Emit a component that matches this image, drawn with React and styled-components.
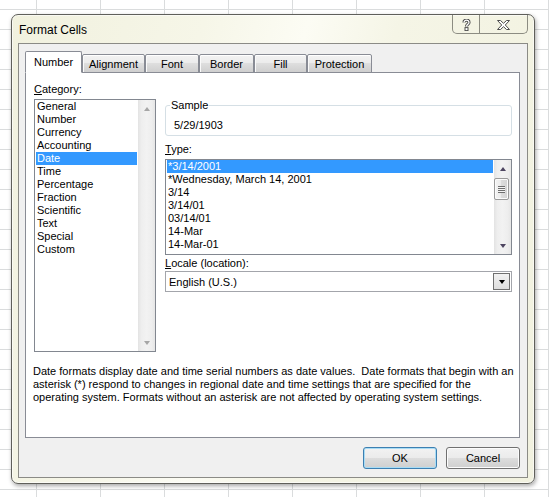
import styled, { createGlobalStyle } from "styled-components";

const GlobalStyle = createGlobalStyle`
    html, body {
        margin: 0;
        padding: 0;
    }
    body {
        font-family: "Liberation Sans", Arial, sans-serif;
        font-size: 11px;
        color: #000;
    }
    * {
        box-sizing: border-box;
    }
`;

const categories = ["General", "Number", "Currency", "Accounting", "Date", "Time",
    "Percentage", "Fraction", "Scientific", "Text", "Special", "Custom"];

const types = ["*3/14/2001", "*Wednesday, March 14, 2001", "3/14", "3/14/01",
    "03/14/01", "14-Mar", "14-Mar-01"];

const tabs = [
    { label: "Number", width: 57 },
    { label: "Alignment", width: 63 },
    { label: "Font", width: 54 },
    { label: "Border", width: 55 },
    { label: "Fill", width: 53 },
    { label: "Protection", width: 65 },
];

const description = `Date formats display date and time serial numbers as date values.  Date formats that begin with an
asterisk (*) respond to changes in regional date and time settings that are specified for the
operating system. Formats without an asterisk are not affected by operating system settings.`;

export default function App() {
    return (
        <>
            <GlobalStyle />
            <Sheet>
                <Window>
                    <TitleBar>
                        <Title>Format Cells</Title>
                        <CaptionButtons>
                            <CaptionButton $width={28}>
                                <svg width="9" height="12" viewBox="0 0 9 12">
                                    <path d="M2 3.6 C2 1.8 3.3 1.2 4.5 1.2 C6 1.2 7 2.1 7 3.4 C7 5.2 4.5 5.3 4.5 7.4"
                                        fill="none" stroke="#505050" strokeWidth="3.2" />
                                    <path d="M2 3.6 C2 1.8 3.3 1.2 4.5 1.2 C6 1.2 7 2.1 7 3.4 C7 5.2 4.5 5.3 4.5 7.4"
                                        fill="none" stroke="#fff" strokeWidth="1.2" />
                                    <rect x="3" y="8.6" width="3" height="3" fill="#fff" stroke="#505050" strokeWidth="1" />
                                </svg>
                            </CaptionButton>
                            <CaptionButton $width={47} $last>
                                <svg width="13" height="10" viewBox="0 0 13 10">
                                    <polygon points="0.5,0.5 3.5,0.5 6.5,3.3 9.5,0.5 12.5,0.5 8.3,5 12.5,9.5 9.5,9.5 6.5,6.7 3.5,9.5 0.5,9.5 4.7,5"
                                        fill="#fff" stroke="#4e4e4e" strokeWidth="1" strokeLinejoin="round" />
                                </svg>
                            </CaptionButton>
                        </CaptionButtons>
                    </TitleBar>
                    <Client>
                        <TabStrip>
                            {tabs.map((t, i) =>
                                <Tab key={t.label} $width={t.width} $active={i === 0}>{t.label}</Tab>)}
                        </TabStrip>
                        <Panel>
                            <Columns>
                                <CategoryColumn>
                                    <FieldLabel><u>C</u>ategory:</FieldLabel>
                                    <ListBox $height={253}>
                                        <Items>
                                            {categories.map(c =>
                                                <Item key={c} $selected={c === "Date"}>{c}</Item>)}
                                        </Items>
                                        <ScrollBar>
                                            <ArrowButton><Arrow $up $disabled /></ArrowButton>
                                            <Track />
                                            <ArrowButton><Arrow $disabled /></ArrowButton>
                                        </ScrollBar>
                                    </ListBox>
                                </CategoryColumn>
                                <DetailColumn>
                                    <SampleGroup>
                                        <Legend>Sample</Legend>
                                        <SampleValue>5/29/1903</SampleValue>
                                    </SampleGroup>
                                    <FieldLabel $top={7}><u>T</u>ype:</FieldLabel>
                                    <ListBox $height={96}>
                                        <Items>
                                            {types.map((t, i) =>
                                                <Item key={t} $selected={i === 0}>{t}</Item>)}
                                        </Items>
                                        <ScrollBar>
                                            <ArrowButton><Arrow $up /></ArrowButton>
                                            <Track>
                                                <Thumb><Grip /></Thumb>
                                            </Track>
                                            <ArrowButton><Arrow /></ArrowButton>
                                        </ScrollBar>
                                    </ListBox>
                                    <FieldLabel $top={2} $bottom={1}><u>L</u>ocale (location):</FieldLabel>
                                    <ComboBox>
                                        <ComboText>English (U.S.)</ComboText>
                                        <DropButton><Arrow $dark /></DropButton>
                                    </ComboBox>
                                </DetailColumn>
                            </Columns>
                            <Description>{description}</Description>
                        </Panel>
                        <ButtonRow>
                            <DialogButton $default>OK</DialogButton>
                            <DialogButton>Cancel</DialogButton>
                        </ButtonRow>
                    </Client>
                </Window>
            </Sheet>
        </>
    );
}

const Sheet = styled.div`
    width: 549px;
    height: 497px;
    padding: 14px 0 0 11px;
    background-color: #fff;
    background-image:
        linear-gradient(to right, #dadcdd 1px, transparent 1px),
        linear-gradient(to bottom, #dadcdd 1px, transparent 1px);
    background-size: 64px 20px;
    background-position: 36px 9px;
    overflow: hidden;
`;

const Window = styled.div`
    width: 524px;
    height: 470px;
    display: flex;
    flex-direction: column;
    padding: 0 6px 5px 6px;
    border: 1px solid #5f5f5a;
    border-radius: 7px;
    background: linear-gradient(105deg, #f1f1de 0%, #f6f6e8 30%, #fcfcf4 46%, #f5f5e6 60%, #f1f1df 100%);
    box-shadow: 1px 2px 4px rgba(0, 0, 0, 0.35), inset 0 0 0 1px rgba(255, 255, 255, 0.6);
`;

const TitleBar = styled.div`
    height: 28px;
    display: flex;
    align-items: flex-start;
`;

const Title = styled.div`
    font-size: 12px;
    line-height: 15px;
    padding: 8px 0 0 1px;
    color: #000;
`;

const CaptionButtons = styled.div`
    margin-left: auto;
    display: flex;
    height: 19px;
    border: 1px solid #8c8c82;
    border-top: none;
    border-radius: 0 0 5px 5px;
    overflow: hidden;
`;

const CaptionButton = styled.div`
    width: ${props => props.$width - (props.$last ? 0 : 1)}px;
    height: 100%;
    display: flex;
    align-items: center;
    justify-content: center;
    padding-top: 1px;
    border-right: ${props => props.$last ? "none" : "1px solid #8c8c82"};
`;

const Client = styled.div`
    flex: 1;
    display: flex;
    flex-direction: column;
    padding: 7px 7px 8px 6px;
    border: 1px solid #8b8b86;
    background: #f0f0f0;
`;

const TabStrip = styled.div`
    height: 22px;
    display: flex;
    align-items: flex-end;
    margin-bottom: -1px;
    position: relative;
    z-index: 1;
`;

const Tab = styled.div`
    width: ${props => props.$width}px;
    height: ${props => props.$active ? 22 : 19}px;
    display: flex;
    align-items: center;
    justify-content: center;
    padding-top: 1px;
    border: 1px solid #898c95;
    border-bottom: ${props => props.$active ? "1px solid #fff" : "1px solid #898c95"};
    border-radius: 2px 2px 0 0;
    background: ${props => props.$active
        ? "#fff"
        : "linear-gradient(#f3f3f3 0%, #ebebeb 50%, #dedede 50%, #cfcfcf 100%)"};
    box-shadow: ${props => props.$active ? "none" : "inset 0 1px 0 #fff, inset 1px 0 0 #fafafa"};
    line-height: 13px;
`;

const Panel = styled.div`
    height: 366px;
    border: 1px solid #898c95;
    background: #fff;
    padding: 10px 7px 0 8px;
    display: flex;
    flex-direction: column;
`;

const Columns = styled.div`
    display: flex;
    gap: 9px;
    align-items: flex-start;
`;

const CategoryColumn = styled.div`
    width: 122px;
    display: flex;
    flex-direction: column;
`;

const DetailColumn = styled.div`
    width: 347px;
    display: flex;
    flex-direction: column;
`;

const FieldLabel = styled.div`
    line-height: 13px;
    margin-top: ${props => props.$top || 0}px;
    margin-bottom: ${props => props.$bottom ?? 3}px;
    u {
        text-decoration: underline;
        text-underline-offset: 1px;
    }
`;

const ListBox = styled.div`
    height: ${props => props.$height}px;
    display: flex;
    border: 1px solid #828790;
    background: #fff;
`;

const Items = styled.div`
    flex: 1;
    padding: 0 1px;
    overflow: hidden;
`;

const Item = styled.div`
    height: 13px;
    line-height: 13px;
    padding-left: 1px;
    white-space: nowrap;
    color: ${props => props.$selected ? "#fff" : "#000"};
    background: ${props => props.$selected ? "#3399ff" : "transparent"};
`;

const ScrollBar = styled.div`
    width: 17px;
    display: flex;
    flex-direction: column;
    background: linear-gradient(to right, #e3e3e3 0%, #eeeeee 20%, #f2f2f2 50%, #eeeeee 80%, #e6e6e6 100%);
`;

const ArrowButton = styled.div`
    height: 17px;
    display: flex;
    align-items: center;
    justify-content: center;
`;

const Arrow = styled.span`
    width: 0;
    height: 0;
    border-left: 3.5px solid transparent;
    border-right: 3.5px solid transparent;
    ${props => props.$up ? "border-bottom" : "border-top"}: 4px solid ${props =>
        props.$dark ? "#000" : props.$disabled ? "#a6a6a6" : "#4d4560"};
`;

const Track = styled.div`
    flex: 1;
    padding: 1px 2px 0 0;
`;

const Thumb = styled.div`
    height: 22px;
    border: 1px solid #9a9a9a;
    border-radius: 2px;
    background: linear-gradient(to right, #f4f4f4 0%, #eaeaea 50%, #dcdcdc 50%, #d4d4d4 100%);
    box-shadow: inset 0 0 0 1px #fbfbfb;
    display: flex;
    align-items: center;
    justify-content: center;
`;

const Grip = styled.span`
    width: 7px;
    height: 7px;
    background: repeating-linear-gradient(to bottom, #6e6e6e 0 1px, #f4f4f4 1px 2px);
`;

const SampleGroup = styled.fieldset`
    margin: 15px 0 0 0;
    padding: 0 0 3px 4px;
    border: 1px solid #d5dfe5;
    border-radius: 3px;
    min-width: 0;
`;

const Legend = styled.legend`
    padding: 0 1px;
    line-height: 14px;
`;

const SampleValue = styled.div`
    margin-top: 7px;
    padding-left: 4px;
    line-height: 13px;
`;

const ComboBox = styled.div`
    height: 21px;
    display: flex;
    align-items: center;
    border: 1px solid #a3a5ab;
    padding: 1px;
    background: #fff;
`;

const ComboText = styled.div`
    flex: 1;
    padding-left: 2px;
`;

const DropButton = styled.div`
    width: 17px;
    height: 17px;
    display: flex;
    align-items: center;
    justify-content: center;
    border: 1px solid #707070;
    background: linear-gradient(#f2f2f2, #dedede);
`;

const Description = styled.div`
    margin: 13px 0 0 -1px;
    line-height: 13px;
    white-space: pre;
`;

const ButtonRow = styled.div`
    margin-top: 9px;
    display: flex;
    justify-content: flex-end;
    gap: 9px;
`;

const DialogButton = styled.div`
    width: 74px;
    height: 22px;
    display: flex;
    align-items: center;
    justify-content: center;
    border: 1px solid ${props => props.$default ? "#3c7fb1" : "#707070"};
    border-radius: 3px;
    background: linear-gradient(#f2f2f2 0%, #ebebeb 50%, #dddddd 50%, #cfcfcf 100%);
    box-shadow: inset 0 0 0 1px ${props => props.$default ? "#a8dcf5" : "#fcfcfc"};
`;
